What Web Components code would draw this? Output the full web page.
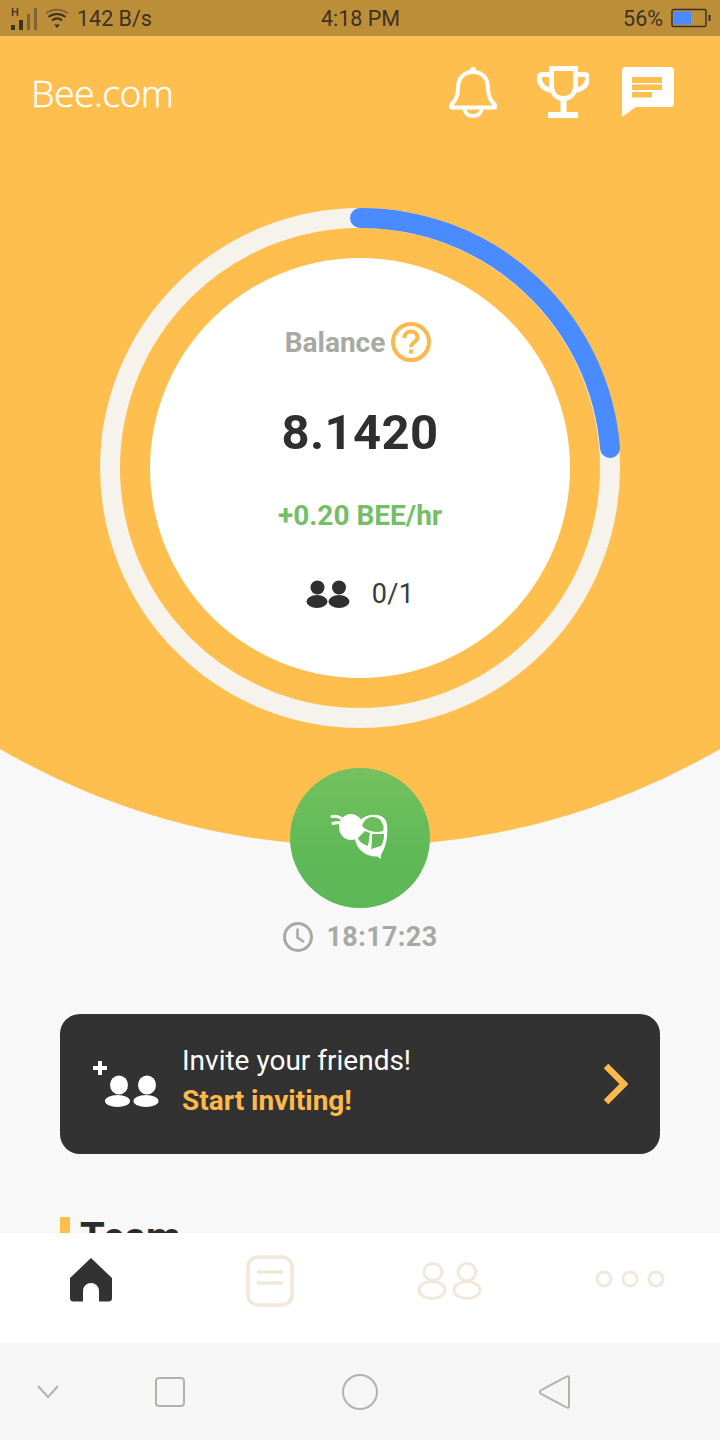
<!DOCTYPE html>
<html>
<head>
<meta charset="utf-8">
<style>
  html, body { margin: 0; padding: 0; background: #f8f8f8; }
  body { width: 720px; height: 1440px; overflow: hidden; font-family: Roboto, "Liberation Sans", sans-serif; }
  #app { display: flex; flex-direction: column; width: 720px; height: 1440px; }
</style>
</head>
<body>
<div id="app">
  <status-bar speed="142 B/s" time="4:18 PM" battery="56%"></status-bar>
  <home-page>
    <app-header slot="top" logo="Bee.com"></app-header>
    <balance-ring slot="top" balance="8.1420" rate="+0.20 BEE/hr" team="0/1"></balance-ring>
    <mine-button slot="top" timer="18:17:23"></mine-button>
    <invite-card title="Invite your friends!" action="Start inviting!"></invite-card>
    <section-title>Team</section-title>
  </home-page>
  <tab-bar></tab-bar>
  <nav-bar></nav-bar>
</div>

<script>
class StatusBar extends HTMLElement {
    connectedCallback() {
        this.attachShadow({mode: 'open'}).innerHTML = `
          <style>
            :host { display: flex; flex: none; height: 36px; background: #bd8e38; color: #3b3226; font: 400 21.500px Roboto, sans-serif; align-items: center; position: relative; }
            .left { flex: 1; display: flex; align-items: center; padding-left: 10px; }
            .mid { flex: none; width: 80px; text-align: center; white-space: nowrap; }
            .right { flex: 1; display: flex; align-items: center; justify-content: flex-end; padding-right: 9px; }
            .speed { margin-left: 8px; }
            .batt { margin-left: 8px; }
            svg { display: block; }
          </style>
          <div class="left">
            <svg width="27" height="26" viewBox="0 0 27 26">
              <text x="1" y="11" font-family="Roboto" font-size="11" font-weight="500" fill="#3b3226">H</text>
              <rect x="1" y="20" width="4" height="5" fill="#3b3226"/>
              <rect x="9" y="15" width="4" height="10" fill="#3b3226"/>
              <rect x="17" y="9" width="3" height="16" fill="#7c6437"/>
              <rect x="24" y="3" width="3" height="22" fill="#7c6437"/>
            </svg>
            <svg width="24" height="22" viewBox="0 0 24 22" style="margin-left:8px" fill="none">
              <path d="M1 6.500C7 1.500 17 1.500 23 6.500" stroke="#7c6437" stroke-width="1.800"/>
              <path d="M3.500 10C8.500 6 15.500 6 20.500 10" stroke="#3b3226" stroke-width="2.200"/>
              <path d="M7 13.500C10 11 14 11 17 13.500" stroke="#3b3226" stroke-width="2.200"/>
              <path d="M9 17.500h6l-3 3.500z" fill="#3b3226"/>
            </svg>
            <span class="speed">${this.getAttribute('speed')}</span>
          </div>
          <div class="mid">${this.getAttribute('time')}</div>
          <div class="right">
            <span>${this.getAttribute('battery')}</span>
            <svg class="batt" width="40" height="20" viewBox="0 0 40 20">
              <rect x="1" y="1.500" width="34" height="17" rx="1.500" fill="none" stroke="#3b3226" stroke-width="1.500"/>
              <rect x="3" y="3.500" width="17" height="13" fill="#4a8cff"/>
              <rect x="37.500" y="7" width="2" height="6" fill="#3b3226"/>
            </svg>
          </div>
        `;
    }
}

class HomePage extends HTMLElement {
    connectedCallback() {
        this.attachShadow({mode: 'open'}).innerHTML = `
          <style>
            :host { display: block; flex: 1; min-height: 0; overflow: hidden; background: #f8f8f8; }
            .hero { position: relative; display: flex; flex-direction: column; align-items: center; }
            /* yellow disc sits behind the header and the ring */
            .disc { position: absolute; left: -356px; bottom: 107px; width: 1432px; height: 1432px; border-radius: 50%; background: #ffbf4f; }
            .hero ::slotted(*) { position: relative; }
            .rest { display: flex; flex-direction: column; padding: 0 60px; }
          </style>
          <div class="hero"><div class="disc"></div><slot name="top"></slot></div>
          <div class="rest"><slot></slot></div>
        `;
    }
}

class AppHeader extends HTMLElement {
    connectedCallback() {
        this.attachShadow({mode: 'open'}).innerHTML = `
          <style>
            :host { display: flex; align-self: stretch; align-items: center; box-sizing: border-box; height: 100px; padding: 12px 46px 0 31px; color: #fff; }
            .logo { flex: 1; font: 300 37.500px "Open Sans", sans-serif; letter-spacing: -0.6px; margin-top: 1px; -webkit-text-stroke: .4px #fff; }
            .icons { display: flex; align-items: center; }
            svg { display: block; }
          </style>
          <div class="logo">${this.getAttribute('logo')}</div>
          <div class="icons">
            <svg width="48" height="52" viewBox="0 0 48 52" fill="none" stroke="#fff" stroke-width="4" stroke-linejoin="round">
              <circle cx="24" cy="4" r="3" fill="#fff" stroke="none"/>
              <path d="M24 6C14 6 9 13 9 22c0 9-3 13-7 17-1 1-.5 2.500 1 2.500h42c1.500 0 2-1.500 1-2.500-4-4-7-8-7-17 0-9-5-16-15-16z"/>
              <path d="M15 42c1 6 5 8 9 8s8-2 9-8"/>
            </svg>
            <svg width="52" height="52" viewBox="0 0 52 52" fill="none" stroke="#fff" stroke-width="5" style="margin-left:40px">
              <path d="M14.500 2.500h24v16c0 9-5 14-12 14s-12-5-12-14z"/>
              <path d="M13 8.500H5.500c-3 0-3.500 2.500-3 5.500 .8 5 4 8.500 11 10.500M40 8.500h7.500c3 0 3.500 2.500 3 5.500-.8 5-4 8.500-11 10.500"/>
              <path d="M26.500 33v15" stroke-width="6"/>
              <path d="M11 49h30" stroke-width="6"/>
            </svg>
            <svg width="52" height="50" viewBox="0 0 52 50" style="margin-left:33px">
              <path d="M4 0h44a4 4 0 0 1 4 4v32a4 4 0 0 1-4 4H14L0 50V4a4 4 0 0 1 4-4z" fill="#fff"/>
              <path d="M10 10h30v6H10zM10 17.500h30V23H10zM10 25h20v5.500H10z" fill="#ffbf4f"/>
            </svg>
          </div>
        `;
    }
}

class BalanceRing extends HTMLElement {
    connectedCallback() {
        this.attachShadow({mode: 'open'}).innerHTML = `
          <style>
            :host { display: block; width: 520px; height: 520px; margin-top: 72px; flex: none; }
            .wrap { position: relative; width: 520px; height: 520px; display: flex; align-items: center; justify-content: center; }
            .ring { position: absolute; left: 0; top: 0; }
            .inner { position: relative; width: 420px; height: 420px; border-radius: 50%; background: #fff; display: flex; flex-direction: column; align-items: center; box-sizing: border-box; padding-top: 64px; }
            .label { display: flex; align-items: center; gap: 6px; font: 700 28px Roboto, sans-serif; color: #a7aaa3; height: 40px; padding-right: 4px; }
            .amount { font: 700 49px Roboto, sans-serif; color: #2f2f2f; margin-top: 41px; height: 60px; line-height: 60px; letter-spacing: .4px; }
            .rate { font: 700 28px Roboto, sans-serif; color: #74bf65; margin-top: 37px; height: 32px; line-height: 32px; }
            .team { display: flex; align-items: center; font: 400 27px Roboto, sans-serif; color: #3a3a3a; margin-top: 46px; height: 32px; letter-spacing: .4px; }
            .team span { margin-left: 22px; }
            svg { display: block; }
          </style>
          <div class="wrap">
            <svg class="ring" width="520" height="520" viewBox="0 0 520 520" fill="none">
              <circle cx="260" cy="260" r="250" stroke="#f6f3ed" stroke-width="20"/>
              <path d="M260 10A250 250 0 0 1 510 240" stroke="#4a8cff" stroke-width="20" stroke-linecap="round"/>
            </svg>
            <div class="inner">
              <div class="label">Balance
                <svg width="40" height="40" viewBox="0 0 40 40" fill="none">
                  <circle cx="20" cy="20" r="18" stroke="#f9b94b" stroke-width="4"/>
                  <path d="M13.500 16c0-4 3-6.500 6.500-6.500s6.500 2.300 6.500 6c0 4.500-6.500 5-6.500 9.500" stroke="#f9b94b" stroke-width="4"/>
                  <rect x="18" y="27.500" width="4" height="4" fill="#f9b94b"/>
                </svg>
              </div>
              <div class="amount">${this.getAttribute('balance')}</div>
              <div class="rate">${this.getAttribute('rate')}</div>
              <div class="team">
                <svg width="44" height="28" viewBox="0 0 44 28" fill="#2f2f2f">
                  <circle cx="11.500" cy="7.500" r="7"/><ellipse cx="11" cy="21.500" rx="10.500" ry="6.500"/>
                  <circle cx="33" cy="7.500" r="7"/><ellipse cx="33" cy="21.500" rx="10.500" ry="6.500"/>
                </svg>
                <span>${this.getAttribute('team')}</span>
              </div>
            </div>
          </div>
        `;
    }
}

class MineButton extends HTMLElement {
    connectedCallback() {
        this.attachShadow({mode: 'open'}).innerHTML = `
          <style>
            :host { display: flex; flex-direction: column; align-items: center; margin-top: 40px; flex: none; }
            .btn { width: 140px; height: 140px; border-radius: 50%; background: linear-gradient(#74c15f 0%, #5fb957 60%, #5cb757 100%); display: flex; align-items: center; justify-content: center; }
            .timer { display: flex; align-items: center; gap: 14px; margin-top: 13px; height: 32px; font: 700 27px Roboto, sans-serif; color: #a7aaa3; letter-spacing: .35px; }
            svg { display: block; }
          </style>
          <div class="btn">
            <svg width="60" height="60" viewBox="330 806 60 60" style="margin-top:-4px">
              <path d="M332 816.500c4-.5 8 .5 11 3.500M333 823.500c3-1 6-1 10-1" stroke="#fff" stroke-width="3" fill="none" stroke-linecap="round"/>
              <ellipse cx="351" cy="827" rx="12" ry="13" fill="#fff"/>
              <path d="M360 820C368 813 382 813 386 821C389 830 387 847 380 856C370 858 360 853 356 843C353 835 355 826 360 820z" fill="#fff"/>
              <path d="M375 855l6-1 0 5z" fill="#fff"/>
              <path d="M362 826C364 820 368 817 372 817C377 817 381 819 382 823C384 826 384 829 383 831C376 833 368 832 362 826z" fill="#6cbe5c"/>
              <path d="M358 838L365 831L370 833L368 846C363 844 359 842 358 838z" fill="#66bb5a"/>
              <path d="M372 834L384 834C384 839 383 843 381 846L371 849C372 844 372 839 372 834z" fill="#66bb5a"/>
            </svg>
          </div>
          <div class="timer">
            <svg width="30" height="30" viewBox="0 0 30 30" fill="none" stroke="#a7aaa3" stroke-width="3">
              <circle cx="15" cy="15" r="13.500"/>
              <path d="M14.500 6.500v9l6.500 4.500" stroke-width="2.500"/>
            </svg>
            <span>${this.getAttribute('timer')}</span>
          </div>
        `;
    }
}

class InviteCard extends HTMLElement {
    connectedCallback() {
        this.attachShadow({mode: 'open'}).innerHTML = `
          <style>
            :host { display: flex; align-items: center; height: 140px; margin-top: 61px; background: #323232; border-radius: 20px; padding: 0 32px; box-sizing: border-box; flex: none; }
            .txt { flex: 1; margin-left: 23px; margin-top: -7px; }
            .a { font: 400 28px/40px Roboto, sans-serif; color: #fff; }
            .b { font: 700 28px/40px Roboto, sans-serif; color: #fdb94b; }
            svg { display: block; flex: none; }
          </style>
          <svg width="67" height="46" viewBox="0 0 67 46" style="margin-top:-1px" fill="#fff">
            <path d="M1 7h14M8 0v14" stroke="#fff" stroke-width="4"/>
            <ellipse cx="27" cy="24" rx="9" ry="9.500"/><ellipse cx="25.500" cy="40" rx="12.500" ry="6"/>
            <ellipse cx="55" cy="24" rx="9" ry="9.500"/><ellipse cx="54" cy="40" rx="12.500" ry="6"/>
          </svg>
          <div class="txt">
            <div class="a">${this.getAttribute('title')}</div>
            <div class="b">${this.getAttribute('action')}</div>
          </div>
          <svg width="24" height="40" viewBox="0 0 24 40" fill="none" stroke="#fdb94b" stroke-width="6.500">
            <path d="M2 2l18 18L2 38"/>
          </svg>
        `;
    }
}

class SectionTitle extends HTMLElement {
    connectedCallback() {
        this.attachShadow({mode: 'open'}).innerHTML = `
          <style>
            :host { display: flex; align-items: flex-start; margin-top: 63px; flex: none; }
            i { display: block; width: 10px; height: 36px; background: #ffbf4f; }
            div { font: 700 40px/42px Roboto, sans-serif; color: #2c2c2c; margin-left: 10px; }
          </style>
          <i></i><div><slot></slot></div>
        `;
    }
}

class TabBar extends HTMLElement {
    connectedCallback() {
        this.attachShadow({mode: 'open'}).innerHTML = `
          <style>
            :host { display: grid; grid-template-columns: repeat(4, 180px); flex: none; height: 110px; background: #fff; position: relative; }
            div { display: flex; justify-content: center; padding-top: 22px; align-items: flex-start; height: 96px; }
            svg { display: block; }
          </style>
          <div><svg width="44" height="44" viewBox="0 0 44 44" style="margin-top:3px;margin-left:2px">
            <path d="M22 0L43 20v20a3.500 3.500 0 0 1-3.500 3.500H30V33a8 8 0 0 0-16 0v10.500H4.500A3.500 3.500 0 0 1 1 40V20z" fill="#323232"/>
          </svg></div>
          <div><svg width="48" height="52" viewBox="0 0 48 52" fill="none" stroke="#f1e8da" stroke-width="3.500">
            <rect x="2" y="2" width="44" height="48" rx="10"/>
            <path d="M11 17h26M11 28h26"/>
          </svg></div>
          <div><svg width="66" height="38" viewBox="0 0 66 38" fill="none" stroke="#f1e8da" stroke-width="3" style="margin-top:7px">
            <ellipse cx="16" cy="10" rx="9" ry="8.500"/><ellipse cx="15" cy="28" rx="13" ry="8.500"/>
            <ellipse cx="50" cy="10" rx="9" ry="8.500"/><ellipse cx="50" cy="28" rx="13" ry="8.500"/>
          </svg></div>
          <div><svg width="70" height="20" viewBox="0 0 70 20" fill="none" stroke="#f1e8da" stroke-width="3" style="margin-top:14px">
            <circle cx="9" cy="10" r="7"/><circle cx="35" cy="10" r="7"/><circle cx="61" cy="10" r="7"/>
          </svg></div>
        `;
    }
}

class NavBar extends HTMLElement {
    connectedCallback() {
        this.attachShadow({mode: 'open'}).innerHTML = `
          <style>
            :host { display: grid; grid-template-columns: 96px 148px 232px 156px; flex: none; height: 97px; background: #f6f6f6; }
            div { display: flex; align-items: center; justify-content: center; }
            svg { display: block; }
          </style>
          <div><svg width="22" height="14" viewBox="0 0 22 14" fill="none" stroke="#b3b3ae" stroke-width="2"><path d="M1 1l10 11L21 1"/></svg></div>
          <div><svg width="30" height="30" viewBox="0 0 30 30" fill="none" stroke="#b3b3ae" stroke-width="2"><rect x="1" y="1" width="28" height="28" rx="3"/></svg></div>
          <div><svg width="36" height="36" viewBox="0 0 36 36" fill="none" stroke="#b3b3ae" stroke-width="2"><circle cx="18" cy="18" r="17"/></svg></div>
          <div><svg width="32" height="36" viewBox="0 0 32 36" fill="none" stroke="#b3b3ae" stroke-width="2"><path d="M29 2.500c1-.6 2-.2 2 1.200v28.600c0 1.400-1 1.800-2 1.200L3 20c-1.500-1-1.500-3 0-4z"/></svg></div>
        `;
    }
}

customElements.define('status-bar', StatusBar);
customElements.define('home-page', HomePage);
customElements.define('app-header', AppHeader);
customElements.define('balance-ring', BalanceRing);
customElements.define('mine-button', MineButton);
customElements.define('invite-card', InviteCard);
customElements.define('section-title', SectionTitle);
customElements.define('tab-bar', TabBar);
customElements.define('nav-bar', NavBar);
</script>
</body>
</html>
